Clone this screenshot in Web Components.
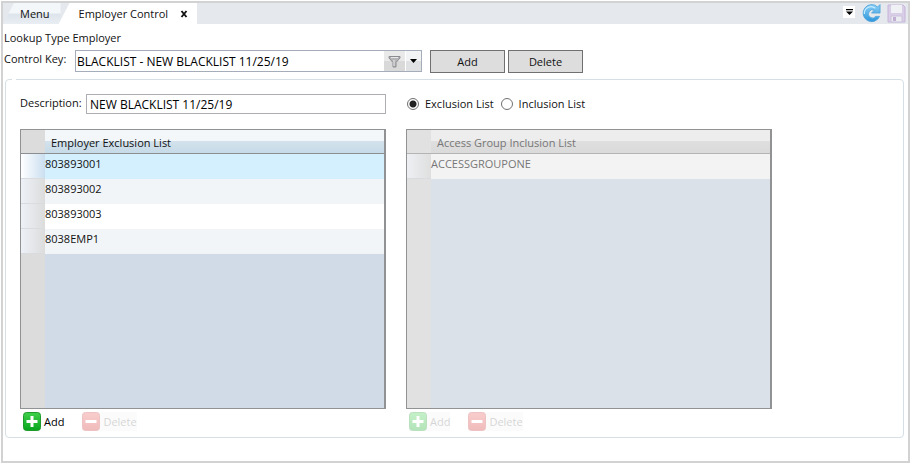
<!DOCTYPE html>
<html lang="en">
<head>
<meta charset="utf-8">
<title>Employer Control</title>
<style>
  body {
    margin: 0;
    background: #fff;
    color: #111;
    font: 11px/16px "Open Sans", "Noto Sans", sans-serif;
  }
</style>
</head>
<body>
<app-window>
  <doc-tab slot="tabs" label="Menu"></doc-tab>
  <doc-tab slot="tabs" label="Employer Control" active></doc-tab>
  <tool-bar slot="tools"></tool-bar>
  <employer-control></employer-control>
</app-window>

<template id="app-window">
  <style>
    :host {
      display: flex;
      flex-direction: column;
      box-sizing: border-box;
      min-height: calc(100vh - 1px);
      margin: 1px 0 0 1px;
      border: 2px solid #d2d2d2;
    }
    header {
      display: flex;
      height: 21px;
      background: #e5e9ee;
    }
    nav { display: flex; flex: 1; }
    main { flex: 1; padding: 6px 4px 0 1px; }
  </style>
  <header>
    <nav><slot name="tabs"></slot></nav>
    <slot name="tools"></slot>
  </header>
  <main><slot></slot></main>
</template>

<template id="doc-tab">
  <style>
    :host {
      display: flex;
      align-items: center;
      box-sizing: border-box;
      height: 21px;
      padding: 0 11px 0 17px;
      background: linear-gradient(#f4f7fa 45%, #dde4eb 55%, #e9eef3);
      clip-path: polygon(11px 0, 100% 0, 100% 100%, 0 100%);
    }
    :host([active]) {
      gap: 9px;
      margin-left: -2px;
      padding: 0 6px 0 20px;
      background: #fff;
    }
    button {
      padding: 0;
      border: 0;
      background: none;
      color: inherit;
      font: inherit;
    }
    .close { display: none; width: 14px; height: 14px; }
    :host([active]) .close { display: block; }
    svg { display: block; margin: auto; }
  </style>
  <button class="label"></button>
  <button class="close" aria-label="Close tab">
    <svg width="8" height="8" viewBox="0 0 8 8"><path d="M1.5 1l5 6M6.500 1l-5 6" stroke="#111" stroke-width="1.900"/></svg>
  </button>
</template>

<template id="tool-bar">
  <style>
    :host { display: flex; align-items: center; gap: 6px; padding-right: 2px; }
    button { display: block; padding: 0; border: 0; background: none; }
    .menu { width: 12px; height: 12px; background: #fff; margin: 0 1px 3px 0; }
    .save { opacity: 0.4; }
    svg { display: block; }
  </style>
  <button class="menu" aria-label="Window list">
    <svg width="12" height="12" viewBox="0 0 12 12"><path d="M3 3h7v1.300H3zM3 5.500h7L6.500 9z"/></svg>
  </button>
  <button aria-label="Refresh">
    <svg width="19" height="20" viewBox="0 0 20 20">
      <defs><linearGradient id="b" x2="0" y2="1"><stop stop-color="#8bd0f6"/><stop offset="1" stop-color="#2d96dc"/></linearGradient></defs>
      <path d="M19 0v9h-9l3-3a4.300 4.300 0 1 0 1.500 6.500h4A9 9 0 1 1 16.400 2.600z" fill="url(#b)" stroke="#4a9fd8" stroke-width=".8"/>
      <path d="M2.500 10A7 7 0 0 1 14 4" fill="none" stroke="#c5ebff" stroke-width="1.200"/>
    </svg>
  </button>
  <button class="save" aria-label="Save" disabled>
    <svg width="19" height="19" viewBox="0 0 19 19">
      <path d="M1 1h15l2 2v15H1z" fill="#c8a6e0" stroke="#9b6bbd"/>
      <path d="M4 1h11v8H4z" fill="#fff"/>
      <path d="M4 12h11v6H4z" fill="#f4f0fa" stroke="#a98bc0"/>
      <path d="M6 13h3v4H6z" fill="#8a5aab"/>
    </svg>
  </button>
</template>

<template id="key-picker">
  <style>
    :host { display: flex; }
    label { width: 71px; padding-top: 1px; }
    .box {
      display: flex;
      box-sizing: border-box;
      width: 347px;
      height: 22px;
      border: 1px solid #a5adba;
      background: #fff;
    }
    select {
      flex: 1;
      min-width: 0;
      padding: 1px 1px 0;
      border: 0;
      appearance: none;
      background: none;
      color: #000;
      font: inherit;
      font-size: 12px;
    }
    button {
      display: grid;
      place-items: center;
      padding: 0;
      border: 0;
      background: linear-gradient(#f2f3f4 50%, #e0e1e3 50%);
    }
    .filter { width: 21px; background: linear-gradient(#e9e9e9 50%, #d9d9d9 50%); }
    .open { width: 16px; border-left: 1px solid #fff; }
  </style>
  <label for="key">Control Key:</label>
  <div class="box">
    <select id="key"><option>BLACKLIST - NEW BLACKLIST 11/25/19</option></select>
    <button class="filter" aria-label="Filter">
      <svg width="13" height="13" viewBox="0 0 13 13"><path d="M1 1.500h11v1.500L8 7.500v4.500H5V7.500L1 3z" fill="#b5b5b8" stroke="#8c8c90"/><path d="M3 2.500h7M6 5v6" stroke="#e8e8ea"/></svg>
    </button>
    <button class="open" aria-label="Open list">
      <svg width="7" height="4" viewBox="0 0 7 4"><path d="M0 0h7L3.500 4z"/></svg>
    </button>
  </div>
</template>

<template id="push-button">
  <style>
    :host { display: block; }
    button {
      width: 75px;
      height: 23px;
      padding: 0;
      border: 1px solid #707070;
      background: #ddd;
      color: #111;
      font: inherit;
    }
  </style>
  <button><slot></slot></button>
</template>

<template id="group-panel">
  <style>
    :host { display: block; }
    fieldset {
      min-width: 0;
      margin: 0;
      padding: 14px 14px 6px;
      border: 1px solid #d5dfe5;
      border-radius: 4px;
    }
    legend { width: 4px; height: 1px; margin-left: -8px; padding: 0; }
  </style>
  <fieldset><legend></legend><slot></slot></fieldset>
</template>

<template id="text-field">
  <style>
    :host { display: flex; align-items: center; }
    label { width: 66px; margin-bottom: 2px; }
    input {
      flex: 1;
      box-sizing: border-box;
      min-width: 0;
      height: 20px;
      padding: 0 3px;
      border: 1px solid #abadb3;
      color: #000;
      font: inherit;
      font-size: 12px;
    }
  </style>
  <label for="field"></label>
  <input id="field" type="text">
</template>

<template id="list-choice">
  <style>
    :host { display: flex; align-items: center; gap: 7px; }
    label { display: flex; align-items: center; gap: 6px; }
    input {
      box-sizing: border-box;
      width: 12px;
      height: 12px;
      margin: 0;
      border: 1px solid #707070;
      border-radius: 50%;
      appearance: none;
      background: #fff;
    }
    input:checked { background: radial-gradient(circle, #212121 3px, #fff 4px); }
  </style>
  <label><input type="radio" name="list" checked>Exclusion List</label>
  <label><input type="radio" name="list">Inclusion List</label>
</template>

<template id="record-list">
  <style>
    :host {
      display: block;
      --line: #909294;
      --gutter: #dcdcdc;
      --head: linear-gradient(#f3f7fa 50%, #d3e2ec 50%, #c6dae7);
      --rule: #8c8f92;
      --tab: linear-gradient(90deg, #edf1f7, #dcdcdc);
      --first: #d4effe;
      --first-tab: linear-gradient(90deg, #fff, #cbdff0);
      --empty: #d1dbe7;
    }
    :host([disabled]) {
      color: #777;
      --gutter: #e1e1e1;
      --head: linear-gradient(#ededed 50%, #dfdfdf 50%, #dadada);
      --rule: #b4b4b4;
      --first: #f3f3f3;
      --first-tab: linear-gradient(90deg, #edeff3, #dfdfdf);
      --empty: #dae1e9;
    }
    .pane {
      box-sizing: border-box;
      height: 280px;
      border: 1px solid var(--line);
      border-right-width: 2px;
      background: linear-gradient(90deg, var(--gutter) 24px, var(--empty) 24px);
    }
    table { width: 100%; border-collapse: separate; border-spacing: 0; table-layout: fixed; }
    th, td { box-sizing: border-box; padding: 0; text-align: left; font-weight: normal; }
    thead th { height: 24px; padding: 3px 6px 0; border-bottom: 1px solid var(--rule); background: var(--head); }
    thead .gutter { background: var(--gutter); }
    .gutter { width: 24px; }
    tbody th { background: var(--tab); border-bottom: 1px solid #d9dcdf; }
    tbody td { height: 25px; padding-bottom: 6px; background: #fff; }
    tbody tr:nth-child(even) td { background: #f1f5f8; }
    tbody tr:first-child td { background: var(--first); }
    tbody tr:first-child th { background: var(--first-tab); }
    footer { display: flex; gap: 18px; padding: 3px 3px 0; }
  </style>
  <div class="pane">
    <table>
      <thead><tr><th class="gutter"></th><th class="title"></th></tr></thead>
      <tbody></tbody>
    </table>
  </div>
  <footer>
    <icon-button kind="add">Add</icon-button>
    <icon-button kind="delete" disabled>Delete</icon-button>
  </footer>
</template>

<template id="icon-button">
  <style>
    :host { display: block; }
    button {
      display: flex;
      align-items: center;
      gap: 3px;
      padding: 0;
      border: 0;
      background: none;
      color: #000;
      font: inherit;
    }
    button:disabled { background: #f5f5f5; opacity: 0.3; }
    button:disabled span { color: #777; }
    .minus, :host([kind="delete"]) .plus { display: none; }
    :host([kind="delete"]) .minus { display: block; }
  </style>
  <button>
    <svg class="plus" width="18" height="19" viewBox="0 0 18 19">
      <defs><linearGradient id="g" x2="0" y2="1"><stop stop-color="#3fd04b"/><stop offset="1" stop-color="#08a51d"/></linearGradient></defs>
      <rect x=".5" y=".5" width="17" height="18" rx="3" fill="url(#g)" stroke="#1f9a2c"/>
      <path d="M9 4v11M3.500 9.500h11" stroke="#fff" stroke-width="3"/>
    </svg>
    <svg class="minus" width="18" height="19" viewBox="0 0 18 19">
      <defs><linearGradient id="r" x2="0" y2="1"><stop stop-color="#ee5c5c"/><stop offset="1" stop-color="#cf2020"/></linearGradient></defs>
      <rect x=".5" y=".5" width="17" height="18" rx="3" fill="url(#r)" stroke="#c43838"/>
      <path d="M3.500 9.500h11" stroke="#fff" stroke-width="3"/>
    </svg>
    <span><slot></slot></span>
  </button>
</template>

<template id="employer-control">
  <style>
    :host { display: block; }
    .type { padding-bottom: 4px; }
    .key { display: flex; gap: 3px; padding-bottom: 6px; }
    key-picker { margin-right: 5px; }
    group-panel { margin-left: 1px; }
    .columns {
      display: grid;
      grid-template-columns: repeat(2, minmax(0, 366px));
      gap: 15px 20px;
    }
    list-choice { padding-left: 1px; }
  </style>
  <div class="type">Lookup Type Employer</div>
  <div class="key">
    <key-picker></key-picker>
    <push-button>Add</push-button>
    <push-button>Delete</push-button>
  </div>
  <group-panel>
    <div class="columns">
      <text-field label="Description:" value="NEW BLACKLIST 11/25/19"></text-field>
      <list-choice></list-choice>
      <record-list heading="Employer Exclusion List" rows="803893001,803893002,803893003,8038EMP1"></record-list>
      <record-list heading="Access Group Inclusion List" rows="ACCESSGROUPONE" disabled></record-list>
    </div>
  </group-panel>
</template>

<script>
class BaseElement extends HTMLElement {
  constructor() {
    super();
    this.attachShadow({ mode: "open" });
    const template = document.getElementById(this.localName);
    this.shadowRoot.appendChild(template.content.cloneNode(true));
  }

  find(selector) {
    return this.shadowRoot.querySelector(selector);
  }
}

class DocTab extends BaseElement {
  connectedCallback() {
    this.find(".label").textContent = this.getAttribute("label");
  }
}

class TextField extends BaseElement {
  connectedCallback() {
    this.find("label").textContent = this.getAttribute("label");
    this.find("input").value = this.getAttribute("value");
  }
}

class IconButton extends BaseElement {
  static observedAttributes = ["disabled"];

  attributeChangedCallback() {
    this.find("button").disabled = this.hasAttribute("disabled");
  }
}

class RecordList extends BaseElement {
  connectedCallback() {
    this.find(".title").textContent = this.getAttribute("heading");

    const body = this.find("tbody");
    body.replaceChildren();
    for (const value of this.getAttribute("rows").split(",")) {
      const row = body.insertRow();
      row.appendChild(document.createElement("th"));
      row.insertCell().textContent = value;
    }

    if (this.hasAttribute("disabled")) {
      this.find("icon-button[kind=add]").setAttribute("disabled", "");
    }
  }
}

customElements.define("app-window", class extends BaseElement {});
customElements.define("tool-bar", class extends BaseElement {});
customElements.define("key-picker", class extends BaseElement {});
customElements.define("push-button", class extends BaseElement {});
customElements.define("group-panel", class extends BaseElement {});
customElements.define("list-choice", class extends BaseElement {});
customElements.define("doc-tab", DocTab);
customElements.define("text-field", TextField);
customElements.define("icon-button", IconButton);
customElements.define("record-list", RecordList);
customElements.define("employer-control", class extends BaseElement {});
</script>
</body>
</html>
